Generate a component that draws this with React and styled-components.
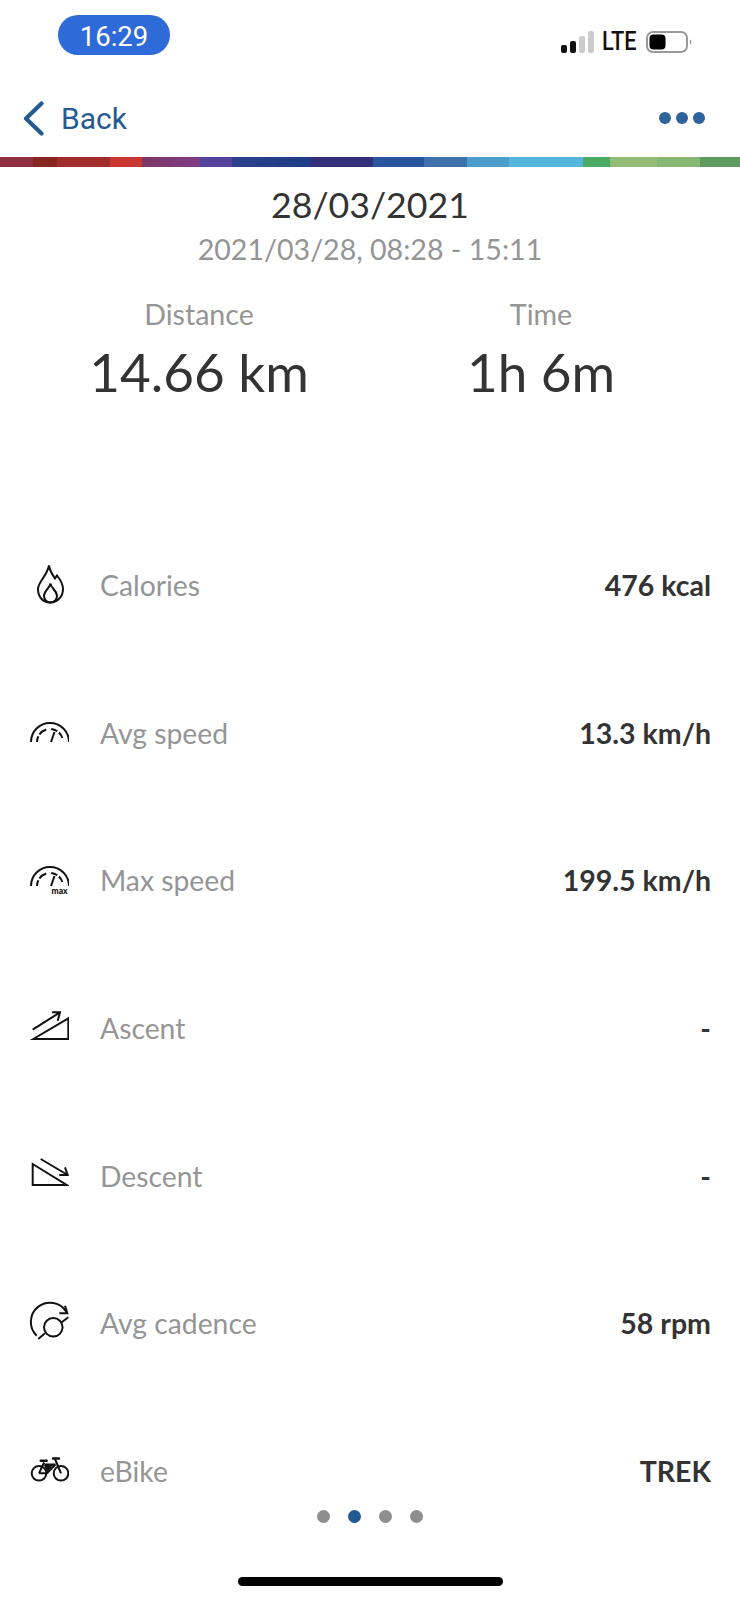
import React from 'react';
import styled, { createGlobalStyle } from 'styled-components';

const GlobalStyle = createGlobalStyle`
  html, body {
    margin: 0;
    padding: 0;
    background: #fff;
  }
  body {
    font-family: Lato, "Open Sans", sans-serif;
  }
`;

const Phone = styled.div`
  position: relative;
  width: 740px;
  height: 1600px;
  overflow: hidden;
  background: #fff;
`;

const StatusBar = styled.div`
  display: flex;
  justify-content: space-between;
  height: 88px;
  padding: 15px 48px 0 58px;
  box-sizing: border-box;
`;

const TimePill = styled.div`
  width: 112px;
  height: 40px;
  border-radius: 20px;
  background: #2f6bd8;
  color: #fff;
  font-family: Roboto, sans-serif;
  font-size: 27.5px;
  line-height: 43px;
  text-align: center;
`;

const StatusRight = styled.div`
  display: flex;
  align-items: center;
  gap: 10px;
  height: 22px;
  margin-top: 16px;
`;

const Lte = styled.span`
  display: block;
  width: 34px;
  margin-left: -2px;
  font-family: Roboto, sans-serif;
  font-size: 25px;
  line-height: 24px;
  font-weight: 500;
  color: #111;
  white-space: nowrap;
  transform: scaleX(0.87);
  transform-origin: left center;
`;

const NavBar = styled.div`
  display: flex;
  align-items: center;
  justify-content: space-between;
  height: 60px;
  padding: 0 35px 0 23px;
`;

const BackLink = styled.div`
  display: flex;
  align-items: center;
  gap: 17px;
  color: #255a93;
  font-family: Roboto, sans-serif;
  font-size: 30px;
`;

const MoreDots = styled.div`
  display: flex;
  gap: 5px;
`;

const MoreDot = styled.span`
  width: 12px;
  height: 12px;
  border-radius: 50%;
  background: #2f639c;
`;

const Strip = styled.div`
  display: flex;
  height: 10px;
  margin-top: 9px;
`;

const StripPart = styled.div`
  width: ${(props) => props.$w}px;
  background: ${(props) => props.$c};
`;

const Heading = styled.div`
  text-align: center;
  margin-top: 17px;
`;

const DateTitle = styled.div`
  font-size: 35.7px;
  line-height: 41px;
  color: #333;
`;

const DateRange = styled.div`
  font-size: 28.6px;
  line-height: 38px;
  margin-top: 5px;
  color: #959595;
`;

const Summary = styled.div`
  display: grid;
  grid-template-columns: 342px 342px;
  padding-left: 28px;
  margin-top: 29px;
  text-align: center;
`;

const SummaryLabel = styled.div`
  font-size: 28.6px;
  line-height: 34px;
  color: #959595;
`;

const SummaryValue = styled.div`
  font-size: 53px;
  line-height: 64px;
  margin-top: 9px;
  color: #333;
`;

const Rows = styled.div`
  margin-top: 107px;
  padding: 0 29px 0 27px;
`;

const Row = styled.div`
  display: flex;
  align-items: center;
  height: 147.7px;
`;

const IconBox = styled.div`
  display: flex;
  justify-content: center;
  width: 42px;
  margin-right: 31px;
  color: #111;
`;

const Label = styled.div`
  flex: 1;
  font-size: 28.3px;
  color: #959595;
`;

const Value = styled.div`
  font-size: 28.5px;
  font-weight: 700;
  color: #333;
`;

const Pager = styled.div`
  position: absolute;
  left: 317px;
  top: 1510px;
  display: flex;
  gap: 18px;
`;

const PagerDot = styled.span`
  width: 13px;
  height: 13px;
  border-radius: 50%;
  background: ${(props) => (props.$active ? '#215893' : '#8e8e8e')};
`;

const HomeBar = styled.div`
  position: absolute;
  left: 238px;
  top: 1577px;
  width: 265px;
  height: 9px;
  border-radius: 5px;
  background: #000;
`;

const stripParts = [
  [33, '#8f2f3f'], [24, '#86261f'], [53, '#a12e2b'], [32, '#c93632'],
  [58, 'linear-gradient(90deg, #7d3666, #7f3c85)'],
  [32, '#53429a'],
  [78, 'linear-gradient(90deg, #2e3f8c, #1c3e85)'],
  [63, '#322f78'], [51, '#29559f'], [43, '#3f72aa'],
  [42, '#4b9ecb'], [74, '#55b5da'], [27, '#4caa67'], [47, '#93bc77'], [43, '#86b871'], [40, '#5f9a61'],
];

const Signal = () => (
  <svg width="33" height="22" viewBox="0 0 33 22">
    <rect x="0" y="14" width="6" height="8" rx="2" fill="#111" />
    <rect x="9" y="10" width="6" height="12" rx="2" fill="#111" />
    <rect x="18" y="5" width="6" height="17" rx="2" fill="#ccc" />
    <rect x="27" y="0" width="6" height="22" rx="2" fill="#ccc" />
  </svg>
);

const Battery = () => (
  <svg width="46" height="22" viewBox="0 0 46 22">
    <rect x="1" y="1" width="40" height="20" rx="6" fill="none" stroke="#999" strokeWidth="2" />
    <rect x="3.500" y="3.500" width="16" height="15" rx="4" fill="#000" />
    <path d="M44 8.500c1.600.6 1.600 4.400 0 5z" fill="#888" />
  </svg>
);

const Chevron = () => (
  <svg width="21" height="35" viewBox="0 0 21 35">
    <path d="M18.500 2.500 3 17.500l15.500 15" fill="none" stroke="#255a93" strokeWidth="4.200" strokeLinecap="round" strokeLinejoin="round" />
  </svg>
);

// every stat icon shares this frame, the viewBox y is what centres it on the row
const StatIcon = ({ y, children }) => (
  <svg width="42" height="48" viewBox={`7 ${y} 42 48`} fill="none" stroke="currentColor" strokeWidth="2">
    {children}
  </svg>
);

const Flame = () => (
  <StatIcon y={2}>
    <path d="M29 6.500c1 6 4 10 6 13l2-3c4 5 6 9 6 13.500 0 8-6 13.500-13 13.500s-12-5.500-12-13.500C18 23 27 17 29 6.500Z" />
    <path d="M30.500 24.500c.5 5 6.500 7 6.500 12.500 0 4-3 6.500-6.500 6.500S24 41 24 37c0-5.500 5.500-7.500 6.500-12.500Z" />
  </StatIcon>
);

const Gauge = () => (
  <>
    <path d="M11 33A19 19 0 0 1 49 33" />
    <path d="M17 33A13 13 0 0 1 43 33" strokeDasharray="6 2 8.500 5 6.500 2 6.500" />
    <path d="M31 33l3.500-10" />
  </>
);

const AvgSpeed = () => (
  <StatIcon y={0}>
    <Gauge />
  </StatIcon>
);

const MaxSpeed = () => (
  <StatIcon y={3}>
    <Gauge />
    <text x="31.500" y="41" fontFamily="Lato, sans-serif" fontSize="8.500" fontWeight="900" fill="currentColor" stroke="none">max</text>
  </StatIcon>
);

const Ascent = () => (
  <StatIcon y={5}>
    <path d="M13.300 40 48.300 19.300V40Z" />
    <path d="M12.700 30.700 40 13.300M32 13.300h8l-2.300 8.400" />
  </StatIcon>
);

const Descent = () => (
  <StatIcon y={3}>
    <path d="M12.700 15 46.700 36H12.700Z" />
    <path d="M20.700 10 47.700 26M45 18.300l2.700 7.700h-8.400" />
  </StatIcon>
);

const Cadence = () => (
  <StatIcon y={5}>
    <path d="M16.700 41.700A19.200 19.200 0 1 1 46.500 18" />
    <path d="M45 11.700l2.300 7.600h-8" />
    <circle cx="33.300" cy="33.300" r="9.300" />
    <path d="M18.300 45 25 39.300M41.700 28.300 48.300 23.300" />
  </StatIcon>
);

const Bike = () => (
  <StatIcon y={8}>
    <circle cx="19" cy="34.300" r="7.300" />
    <circle cx="41" cy="34.300" r="7.300" />
    <path d="M19 34.300 24 23.500M24.500 25.500 35.500 25.500M35 20 41 34.300M19 34.300H27L35.500 25.500" />
    <path d="M20.700 21.700h6M33 19.500h6" strokeWidth="2.400" strokeLinecap="round" />
    <path d="M24 26h9l-6 7.500Z" fill="currentColor" stroke="none" />
  </StatIcon>
);

const stats = [
  { label: 'Calories', value: '476 kcal', Icon: Flame },
  { label: 'Avg speed', value: '13.3 km/h', Icon: AvgSpeed },
  { label: 'Max speed', value: '199.5 km/h', Icon: MaxSpeed },
  { label: 'Ascent', value: '-', Icon: Ascent },
  { label: 'Descent', value: '-', Icon: Descent },
  { label: 'Avg cadence', value: '58 rpm', Icon: Cadence },
  { label: 'eBike', value: 'TREK', Icon: Bike },
];

const App = () => {
  return (
    <Phone>
      <GlobalStyle />
      <StatusBar>
        <TimePill>16:29</TimePill>
        <StatusRight>
          <Signal />
          <Lte>LTE</Lte>
          <Battery />
        </StatusRight>
      </StatusBar>
      <NavBar>
        <BackLink>
          <Chevron />
          Back
        </BackLink>
        <MoreDots>
          <MoreDot />
          <MoreDot />
          <MoreDot />
        </MoreDots>
      </NavBar>
      <Strip>
        {stripParts.map(([w, c]) => (
          <StripPart key={c} $w={w} $c={c} />
        ))}
      </Strip>
      <Heading>
        <DateTitle>28/03/2021</DateTitle>
        <DateRange>2021/03/28, 08:28 - 15:11</DateRange>
      </Heading>
      <Summary>
        <div>
          <SummaryLabel>Distance</SummaryLabel>
          <SummaryValue>14.66 km</SummaryValue>
        </div>
        <div>
          <SummaryLabel>Time</SummaryLabel>
          <SummaryValue>1h 6m</SummaryValue>
        </div>
      </Summary>
      <Rows>
        {stats.map(({ label, value, Icon }) => (
          <Row key={label}>
            <IconBox>
              <Icon />
            </IconBox>
            <Label>{label}</Label>
            <Value>{value}</Value>
          </Row>
        ))}
      </Rows>
      <Pager>
        <PagerDot />
        <PagerDot $active />
        <PagerDot />
        <PagerDot />
      </Pager>
      <HomeBar />
    </Phone>
  );
};

export default App;
